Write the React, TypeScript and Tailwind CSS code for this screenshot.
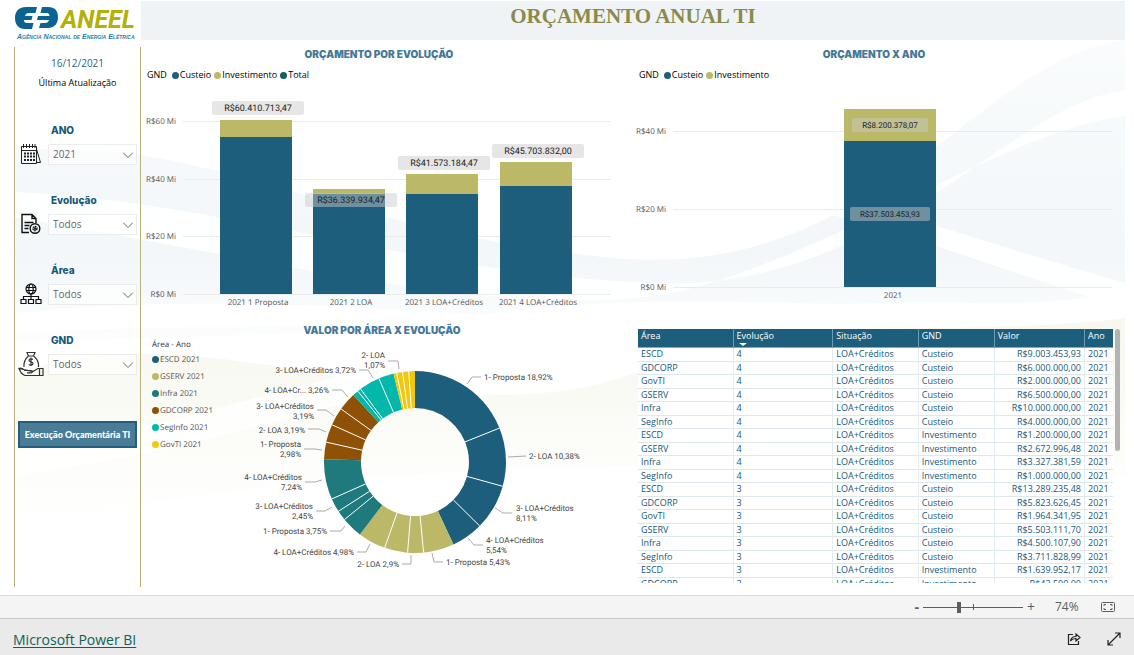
import { useState } from 'react';

const BLUE = '#1d5e7d';
const OLIVE = '#bbb868';

interface StackedBar {
    label: string;
    x: number;
    top: number;
    split: number;
    total: string;
    tagY: number;
}

const evolutionBars: StackedBar[] = [
    { label: '2021 1 Proposta', x: 79, top: 38, split: 55, total: 'R$60.410.713,47', tagY: 19 },
    { label: '2021 2 LOA', x: 172, top: 107, split: 112, total: 'R$36.339.934,47', tagY: 111 },
    { label: '2021 3 LOA+Créditos', x: 265, top: 92, split: 112, total: 'R$41.573.184,47', tagY: 74 },
    { label: '2021 4 LOA+Créditos', x: 359, top: 80, split: 104, total: 'R$45.703.832,00', tagY: 62 },
];

// stops are percentages of the full ring
const ringGroups = [
    { name: 'ESCD 2021', color: '#1d5e7d', dot: 'bg-[#1d5e7d]', stops: [0, 18.92, 29.3, 37.41, 43.05] },
    { name: 'GSERV 2021', color: '#bbb868', dot: 'bg-[#bbb868]', stops: [43.05, 48.5, 51.3, 55.4, 60.35] },
    { name: 'Infra 2021', color: '#1f7a7d', dot: 'bg-[#1f7a7d]', stops: [60.35, 64.1, 65.9, 68.35, 75.5] },
    { name: 'GDCORP 2021', color: '#8f5106', dot: 'bg-[#8f5106]', stops: [75.5, 78.5, 81.7, 84.9, 88.15] },
    { name: 'SegInfo 2021', color: '#03b8aa', dot: 'bg-[#03b8aa]', stops: [88.15, 89.2, 89.8, 93.5, 96.2] },
    { name: 'GovTI 2021', color: '#f2c80f', dot: 'bg-[#f2c80f]', stops: [96.2, 96.75, 97.8, 98.9, 100] },
];

interface RingLabel {
    lines: string[];
    x: number;
    y: number;
    end?: boolean;
    leader: string;
}

const ringLabels: RingLabel[] = [
    { lines: ['1- Proposta 18,92%'], x: 69, y: -82, leader: '52,-78 57,-85 66,-85' },
    { lines: ['2- LOA 10,38%'], x: 114, y: -3, leader: '93,-5 111,-6' },
    { lines: ['3- LOA+Créditos', '8,11%'], x: 101, y: 49, leader: '80,46 88,51 97,51' },
    { lines: ['4- LOA+Créditos', '5,54%'], x: 71, y: 81, leader: '53,76 59,83 68,83' },
    { lines: ['1- Proposta 5,43%'], x: 31, y: 103, leader: '17,91 19,100 28,100' },
    { lines: ['2- LOA 2,9%'], x: -16, y: 105, end: true, leader: '-4,93 -4,102 -13,102' },
    { lines: ['4- LOA+Créditos 4,98%'], x: -61, y: 93, end: true, leader: '-45,82 -49,90 -58,90' },
    { lines: ['1- Proposta 3,75%'], x: -88, y: 72, end: true, leader: '-70,64 -74,69 -85,69' },
    { lines: ['3- LOA+Créditos', '2,45%'], x: -102, y: 47, end: true, leader: '-83,45 -90,49 -99,49' },
    { lines: ['4- LOA+Créditos', '7,24%'], x: -113, y: 18, end: true, leader: '-93,18 -100,20 -110,20' },
    { lines: ['1- Proposta', '2,98%'], x: -114, y: -15, end: true, leader: '-93,-12 -100,-13 -111,-13' },
    { lines: ['2- LOA 3,19%'], x: -110, y: -29, end: true, leader: '-89,-30 -96,-33 -107,-33' },
    { lines: ['3- LOA+Créditos', '3,19%'], x: -101, y: -53, end: true, leader: '-81,-46 -89,-52 -98,-52' },
    { lines: ['4- LOA+Cr... 3,26%'], x: -86, y: -69, end: true, leader: '-67,-65 -73,-72 -83,-72' },
    { lines: ['3- LOA+Créditos 3,72%'], x: -59, y: -89, end: true, leader: '-42,-84 -47,-92 -56,-92' },
    { lines: ['2- LOA', '1,07%'], x: -30, y: -104, end: true, leader: '-16,-93 -17,-101 -27,-101' },
];

const rows = [
    ['ESCD', '4', 'Custeio', 'R$9.003.453,93'],
    ['GDCORP', '4', 'Custeio', 'R$6.000.000,00'],
    ['GovTI', '4', 'Custeio', 'R$2.000.000,00'],
    ['GSERV', '4', 'Custeio', 'R$6.500.000,00'],
    ['Infra', '4', 'Custeio', 'R$10.000.000,00'],
    ['SegInfo', '4', 'Custeio', 'R$4.000.000,00'],
    ['ESCD', '4', 'Investimento', 'R$1.200.000,00'],
    ['GSERV', '4', 'Investimento', 'R$2.672.996,48'],
    ['Infra', '4', 'Investimento', 'R$3.327.381,59'],
    ['SegInfo', '4', 'Investimento', 'R$1.000.000,00'],
    ['ESCD', '3', 'Custeio', 'R$13.289.235,48'],
    ['GDCORP', '3', 'Custeio', 'R$5.823.626,45'],
    ['GovTI', '3', 'Custeio', 'R$1.964.341,95'],
    ['GSERV', '3', 'Custeio', 'R$5.503.111,70'],
    ['Infra', '3', 'Custeio', 'R$4.500.107,90'],
    ['SegInfo', '3', 'Custeio', 'R$3.711.828,99'],
    ['ESCD', '3', 'Investimento', 'R$1.639.952,17'],
    ['GDCORP', '3', 'Investimento', 'R$43.500,00'],
];

function polar(radius: number, percent: number) {
    const angle = (percent / 100) * Math.PI * 2;
    return `${(radius * Math.sin(angle)).toFixed(2)} ${(-radius * Math.cos(angle)).toFixed(2)}`;
}

function arcPath(from: number, to: number) {
    return `M${polar(91, from)} A91 91 0 0 1 ${polar(91, to)} L${polar(54, to)} A54 54 0 0 0 ${polar(54, from)} Z`;
}

function Logo() {
    return (
        <svg viewBox="0 0 127 40" className="h-10 w-[127px] shrink-0" role="img" aria-label="ANEEL">
            <path fill="#0a6390" d="M23 7H12C4 7 1 12 1 18c0 6 3 11 10 11h7l1.500-6H13c-2 0-3-1-3-3h7.500l1-4H11c.5-2 1.500-3 4-3h6.500z" />
            <path fill="#0a6390" d="M28 7h6c7 0 10 4 10 10 0 7-4 11-10 11h-9l1.500-5H31c2 0 3.500-1 4-3H23l1-4h11.500c0-2-1-3-3-3H26.500z" />
            <text x="47" y="28" fill="#b3b007" className="font-[Roboto,sans-serif] text-[25px] font-bold italic">ANEEL</text>
            <text x="3" y="39" fill="#1583ad" className="font-['Liberation_Sans_Narrow','Liberation_Sans',sans-serif] text-[7px] font-bold italic [font-variant:small-caps]">
                Agência Nacional de Energia Elétrica
            </text>
        </svg>
    );
}

function CalendarIcon() {
    return (
        <svg viewBox="0 0 22 22" className="size-[22px]" fill="none" stroke="#222" strokeWidth="1">
            <path d="M1.500 3.500h15v17h-15zM1.500 7.500h15M16.500 6l4 13.500h-4" />
            <path d="M3.500 1v4M6.500 1v4M9.500 1v4M12.500 1v4M15 1v4" />
            <path d="M4 10.500h11M4 13.500h11M4 17h11" strokeWidth="2" strokeDasharray="2 1" />
        </svg>
    );
}

function DocumentIcon() {
    return (
        <svg viewBox="0 0 22 22" className="size-[22px]" fill="none" stroke="#111" strokeWidth="1.4">
            <path d="M9 19.500H2V1.500h10l4 4V10M12 1.500v4h4M4.500 9.500h9M4.500 12.500h5M4.500 15.500h4" />
            <circle cx="15" cy="15.500" r="4.800" />
            <circle cx="15" cy="15.500" r="2" strokeDasharray="1.500 0.600" />
            <circle cx="15" cy="15.500" r="0.500" />
        </svg>
    );
}

function NetworkIcon() {
    return (
        <svg viewBox="0 0 22 22" className="size-[22px]" fill="none" stroke="#111" strokeWidth="1.200">
            <circle cx="11" cy="6" r="5" />
            <ellipse cx="11" cy="6" rx="2.200" ry="5" />
            <path d="M6 4.500h10M6 7.500h10M11 11v6M3.500 16.500v-3h15v3" />
            <path d="M1 16.500h5v4H1zM8.500 16.500h5v4h-5zM16 16.500h5v4h-5z" />
        </svg>
    );
}

function MoneyIcon() {
    return (
        <svg viewBox="0 0 26 26" className="size-[26px]" fill="none" stroke="#333" strokeWidth="1.200">
            <path d="M9 1.500h8l-1.500 3.500h-5zM10.500 5C7 8 5.500 11 6 16M15.500 5c4 3 5.500 6 5 11" />
            <path d="M15 8.500c-1-1-4-1-4 .8 0 2 4 1.200 4 3.200 0 1.800-3 2-4.200.8M13 6.500v8.500" />
            <path d="M1 17.500c2-1 4 0 6 2h6c2 0 2 2 0 2.300H9M15 20.500l5-3h5v7H7c-3-1-5-4-6-7zM21.500 17.500v7" />
        </svg>
    );
}

interface FilterProps {
    id: string;
    label: string;
    options: string[];
    icon: React.ReactNode;
}

function Filter({ id, label, options, icon }: FilterProps) {
    return (
        <div className="h-[70px]">
            <label htmlFor={id} className="ml-[33px] block font-[Inter,sans-serif] text-[10px] leading-4 font-extrabold text-[#17597a]">
                {label}
            </label>
            <div className="mt-[3px] flex h-[26px] items-center gap-1">
                <span className="flex w-[26px] justify-center">{icon}</span>
                <div className="relative flex-1">
                    <select
                        id={id}
                        className="block h-[21px] w-full appearance-none border border-[#ececec] bg-white/60 px-1 text-[10px] text-[#666]"
                    >
                        {options.map((option) => (
                            <option key={option}>{option}</option>
                        ))}
                    </select>
                    <svg viewBox="0 0 10 6" className="pointer-events-none absolute top-2 right-1 h-1.5 w-2.5" fill="none" stroke="#666">
                        <path d="M0 0.500l5 5 5-5" />
                    </svg>
                </div>
            </div>
        </div>
    );
}

function Legend({ items }: { items: { name: string; dot: string }[] }) {
    return (
        <div className="mt-[5px] flex items-center gap-[3px] pl-1.5 text-[9px] leading-4 text-black">
            <span className="mr-0.5">GND</span>
            {items.map((item) => (
                <span key={item.name} className="flex items-center gap-px">
                    <span className={`size-[7px] rounded-full ${item.dot}`} />
                    {item.name}
                </span>
            ))}
        </div>
    );
}

function PanelTitle({ children }: { children: React.ReactNode }) {
    return (
        <h2 className="text-center font-[Inter,sans-serif] text-[10px] leading-4 font-black text-[#44799a]">{children}</h2>
    );
}

interface ValueTagProps {
    x: number;
    y: number;
    width: number;
    text: string;
    size: string;
}

function ValueTag({ x, y, width, text, size }: ValueTagProps) {
    return (
        <g>
            <rect x={x} y={y} width={width} height="14" rx="2" fill="#c9c9c9" opacity="0.47" />
            <text x={x + width / 2} y={y + 10} textAnchor="middle" fill="#222" className={`font-[Roboto,sans-serif] ${size}`}>
                {text}
            </text>
        </g>
    );
}

function EvolutionChart() {
    const ticks = [
        { label: 'R$60 Mi', y: 39 },
        { label: 'R$40 Mi', y: 97 },
        { label: 'R$20 Mi', y: 154 },
        { label: 'R$0 Mi', y: 212 },
    ];
    return (
        <svg viewBox="0 1 476 239" className="w-full text-[8px] [text-rendering:geometricPrecision]" fill="#555">
            {ticks.map((tick) => (
                <g key={tick.label}>
                    <path d={`M42 ${tick.y + 0.5}H470`} stroke="#ebebeb" />
                    <text x="35" y={tick.y + 3} textAnchor="end">{tick.label}</text>
                </g>
            ))}
            {evolutionBars.map((bar) => (
                <g key={bar.label}>
                    <rect x={bar.x} y={bar.top} width="72" height={bar.split - bar.top} fill={OLIVE} />
                    <rect x={bar.x} y={bar.split} width="72" height={212 - bar.split} fill={BLUE} />
                    <ValueTag x={bar.x - 8} y={bar.tagY} width={92} text={bar.total} size="text-[9px]" />
                    <text x={bar.x + 38} y="223" textAnchor="middle">{bar.label}</text>
                </g>
            ))}
        </svg>
    );
}

function YearChart() {
    const ticks = [
        { label: 'R$40 Mi', y: 49 },
        { label: 'R$20 Mi', y: 127 },
        { label: 'R$0 Mi', y: 205 },
    ];
    return (
        <svg viewBox="0 1 482 239" className="w-full text-[8px] [text-rendering:geometricPrecision]" fill="#555">
            {ticks.map((tick) => (
                <g key={tick.label}>
                    <path d={`M40 ${tick.y + 0.5}H479`} stroke="#ebebeb" />
                    <text x="33" y={tick.y + 3} textAnchor="end">{tick.label}</text>
                </g>
            ))}
            <rect x="211" y="27" width="92" height="32" fill={OLIVE} />
            <rect x="211" y="59" width="92" height="146" fill={BLUE} />
            <ValueTag x={219} y={36} width={76} text="R$8.200.378,07" size="text-[8px]" />
            <ValueTag x={217} y={125} width={80} text="R$37.503.453,93" size="text-[8px]" />
            <text x="260" y="216" textAnchor="middle">2021</text>
        </svg>
    );
}

function RingChart() {
    return (
        <svg viewBox="-184 -124 402 246" className="min-w-0 flex-1 [text-rendering:geometricPrecision]" fill="#444">
            {ringGroups.map((group) => (
                <g key={group.name}>
                    <path d={arcPath(group.stops[0], group.stops[4])} fill={group.color} />
                    {group.stops.slice(1, 4).map((stop) => (
                        <path key={stop} d={`M${polar(54, stop)} L${polar(91, stop)}`} stroke="#fff" />
                    ))}
                </g>
            ))}
            {ringLabels.map((label) => (
                <g key={label.leader}>
                    <polyline points={label.leader} fill="none" stroke="#aaa" />
                    {label.lines.map((line, index) => (
                        <text
                            key={line}
                            x={label.x}
                            y={label.y + index * 10}
                            textAnchor={label.end ? 'end' : 'start'}
                            className="font-[Roboto,sans-serif] text-[8px]"
                        >
                            {line}
                        </text>
                    ))}
                </g>
            ))}
        </svg>
    );
}

function BudgetTable() {
    return (
        <div className="mt-[7px] mr-[5px] ml-[5px] flex h-[254px] gap-0.5">
            <div className="flex-1 overflow-hidden">
                <table className="w-full table-fixed border-collapse bg-white text-left text-[9px] text-[#17587a]">
                    <colgroup>
                        <col className="w-[20%]" />
                        <col className="w-[21%]" />
                        <col className="w-[18%]" />
                        <col className="w-[16%]" />
                        <col className="w-[19%]" />
                        <col className="w-[6%]" />
                    </colgroup>
                    <thead>
                        <tr className="h-[18px] border-b border-[#a5a76b] bg-[#1d5e7d] align-top text-white *:border-r *:border-[#6f9bb0] *:px-[3px] *:font-normal *:leading-[14px] *:last:border-r-0">
                            <th>Área</th>
                            <th className="relative">
                                Evolução
                                <span className="absolute bottom-px left-[5px] border-x-4 border-t-3 border-x-transparent border-t-white" />
                            </th>
                            <th>Situação</th>
                            <th>GND</th>
                            <th>Valor</th>
                            <th>Ano</th>
                        </tr>
                    </thead>
                    <tbody>
                        {rows.map(([area, step, gnd, value]) => (
                            <tr
                                key={`${area}-${step}-${gnd}`}
                                className="border-b border-[#dde8ed] odd:h-[14px] even:h-[13px] *:border-r *:border-[#e3ecf0] *:px-[3px] *:leading-3 *:last:border-r-0"
                            >
                                <td>{area}</td>
                                <td>{step}</td>
                                <td>LOA+Créditos</td>
                                <td>{gnd}</td>
                                <td className="text-right">{value}</td>
                                <td>2021</td>
                            </tr>
                        ))}
                    </tbody>
                </table>
            </div>
            <div className="h-[122px] w-[5px] rounded-full bg-[#b3b3b3]" />
        </div>
    );
}

function Waves() {
    return (
        <svg viewBox="0 0 1116 540" preserveAspectRatio="none" className="absolute inset-0 size-full">
            <defs>
                <linearGradient id="cool" x1="0" y1="0" x2="0" y2="1">
                    <stop offset="0" stopColor="#f6fafb" />
                    <stop offset="0.7" stopColor="#eaf1f5" />
                    <stop offset="1" stopColor="#fbfdfd" />
                </linearGradient>
                <linearGradient id="warm" x1="0" y1="0" x2="0" y2="1">
                    <stop offset="0" stopColor="#f7f7ee" />
                    <stop offset="1" stopColor="#ffffff" />
                </linearGradient>
            </defs>
            <path d="M0 110C180 90 330 190 600 215S960 20 1116 0V250C900 280 700 240 480 270S120 290 0 300z" fill="url(#cool)" opacity="0.6" />
            <path d="M0 330C200 260 420 400 620 330S980 280 1116 270V430C800 420 400 400 0 480z" fill="url(#warm)" />
            <path d="M0 150C220 160 400 230 640 240S1000 60 1116 50V75C1000 90 860 190 700 240S280 220 0 175z" fill="#fff" opacity="0.9" />
            <path d="M420 150C600 60 800 150 1116 240V265C900 200 640 80 420 175z" fill="#fff" opacity="0.9" />
            <path d="M0 270C300 240 500 290 700 270S1000 265 1116 260V275C900 300 300 270 0 290z" fill="#fff" opacity="0.9" />
            <path d="M0 405C240 370 360 300 620 290V310C400 320 240 400 0 430z" fill="#fff" opacity="0.8" />
        </svg>
    );
}

export default function App() {
    const [zoom, setZoom] = useState(35);

    return (
        <div className="flex min-h-screen flex-col bg-white font-['Open_Sans','Noto_Sans',sans-serif]">
            <main className="flex flex-1 flex-col pr-[9px] pb-2 pl-[14px]">
                <header className="flex">
                    <Logo />
                    <h1 className="mt-px h-[39px] flex-1 bg-[#eff3f6] pt-px text-center font-['Liberation_Serif',serif] text-[21px] leading-7 font-bold text-[#8a8a4b]">
                        ORÇAMENTO ANUAL TI
                    </h1>
                </header>

                <div className="relative flex flex-1">
                    <Waves />

                    <aside className="relative mt-[7px] flex w-[127px] shrink-0 flex-col border-x border-[#b5b37c] pr-[3px] pl-[3px]">
                        <div className="pt-2 text-center text-[9px] leading-4 text-black">
                            <div className="text-[10px] text-[#1f6485]">16/12/2021</div>
                            <div className="mt-1">Última Atualização</div>
                        </div>
                        <div className="mt-[31px]">
                            <Filter id="ano" label="ANO" options={['2021', '2020']} icon={<CalendarIcon />} />
                            <Filter id="evolucao" label="Evolução" options={['Todos']} icon={<DocumentIcon />} />
                            <Filter id="area" label="Área" options={['Todos']} icon={<NetworkIcon />} />
                            <Filter id="gnd" label="GND" options={['Todos']} icon={<MoneyIcon />} />
                        </div>
                        <button className="mt-[19px] h-[27px] border-2 border-[#235f7d] bg-[#497d97] font-[Lato,sans-serif] text-[9px] font-black whitespace-nowrap text-white">
                            Execução Orçamentária TI
                        </button>
                    </aside>

                    <div className="relative grid min-w-0 flex-1 grid-cols-2">
                        <div className="pt-1.5">
                            <section className="pr-4">
                                <PanelTitle>ORÇAMENTO POR EVOLUÇÃO</PanelTitle>
                                <Legend
                                    items={[
                                        { name: 'Custeio', dot: 'bg-[#1d5e7d]' },
                                        { name: 'Investimento', dot: 'bg-[#bbb868]' },
                                        { name: 'Total', dot: 'bg-[#155f60]' },
                                    ]}
                                />
                                <EvolutionChart />
                            </section>
                            <section>
                                <div className="pr-2.5">
                                    <PanelTitle>VALOR POR ÁREA X EVOLUÇÃO</PanelTitle>
                                </div>
                                <div className="flex items-start">
                                    <div className="w-[90px] shrink-0 pt-px pl-[11px] text-[8px] text-[#555] [text-rendering:geometricPrecision]">
                                        <div className="leading-3 text-[#333]">Área - Ano</div>
                                        <ul>
                                            {ringGroups.map((group) => (
                                                <li key={group.name} className="flex items-center gap-px leading-[17px]">
                                                    <span className={`size-[7px] rounded-full ${group.dot}`} />
                                                    {group.name}
                                                </li>
                                            ))}
                                        </ul>
                                    </div>
                                    <RingChart />
                                </div>
                            </section>
                        </div>

                        <div className="pt-1.5">
                            <section className="pr-2.5">
                                <PanelTitle>ORÇAMENTO X ANO</PanelTitle>
                                <Legend
                                    items={[
                                        { name: 'Custeio', dot: 'bg-[#1d5e7d]' },
                                        { name: 'Investimento', dot: 'bg-[#bbb868]' },
                                    ]}
                                />
                                <YearChart />
                            </section>
                            <BudgetTable />
                        </div>
                    </div>
                </div>
            </main>

            <div className="flex h-[23px] items-center justify-end border-t border-[#dcdcdc] bg-[#f4f4f4] pr-[19px] text-[#605e5c]">
                <button aria-label="Diminuir zoom" className="px-1 text-sm leading-4 font-bold">-</button>
                <div className="relative flex h-3 w-[100px] items-center">
                    <input
                        type="range"
                        aria-label="Zoom"
                        value={zoom}
                        onChange={(event) => setZoom(Number(event.target.value))}
                        className="h-px w-full appearance-none bg-[#605e5c] [&::-webkit-slider-thumb]:h-[11px] [&::-webkit-slider-thumb]:w-1 [&::-webkit-slider-thumb]:appearance-none [&::-webkit-slider-thumb]:bg-[#605e5c]"
                    />
                    <span className="pointer-events-none absolute left-1/2 h-1.5 w-px bg-[#605e5c]" />
                </div>
                <button aria-label="Aumentar zoom" className="px-1 text-sm leading-4">+</button>
                <span className="ml-4 w-[26px] text-xs">74%</span>
                <button aria-label="Ajustar à página" className="ml-5">
                    <svg viewBox="0 0 14 10" className="h-2.5 w-3.5" fill="none" stroke="#605e5c">
                        <rect x="0.500" y="0.500" width="13" height="9" rx="1" />
                        <path d="M3 4V2.500h2M9 2.500h2V4M11 6v1.500H9M5 7.500H3V6" />
                    </svg>
                </button>
            </div>

            <footer className="flex h-[37px] items-center border-t border-[#c8c8c8] bg-[#eaeaea] px-[13px] pt-1">
                <div className="flex-1">
                    <a href="#powerbi" className="text-[14px] text-[#0f6157] underline underline-offset-2">Microsoft Power BI</a>
                </div>
                <button aria-label="Compartilhar">
                    <svg viewBox="0 0 14 14" className="size-3.5" fill="none" stroke="#222" strokeWidth="1.2">
                        <path d="M6 2.500H1.500v10h10V9" />
                        <path d="M3.500 9C4 6 6 4.500 9 4.500V2l4 3.500-4 3.500V6.500C7 6.500 5 7 3.500 9z" />
                    </svg>
                </button>
                <button aria-label="Tela cheia" className="ml-[26px]">
                    <svg viewBox="0 0 14 14" className="size-3.5" fill="none" stroke="#222" strokeWidth="1.2">
                        <path d="M1 13L13 1M8 1h5v5M1 8v5h5" />
                    </svg>
                </button>
            </footer>
        </div>
    );
}
